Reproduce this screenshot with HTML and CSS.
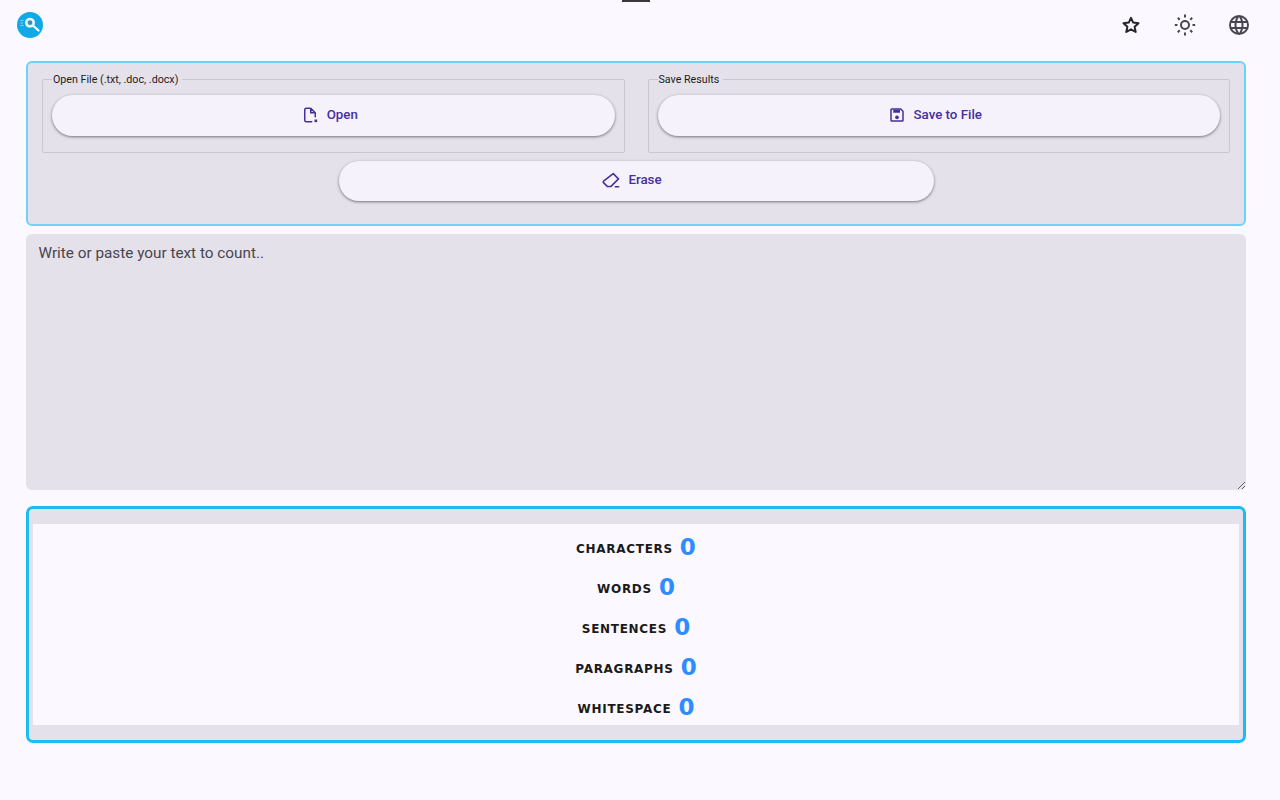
FILE: index.html
```html
<!DOCTYPE html>
<html lang="en">
<head>
<meta charset="utf-8">
<title>Word Counter</title>
<link rel="stylesheet" href="styles.css">
</head>
<body>
<div class="notch"></div>
<header class="topbar">
  <svg class="logo" viewBox="0 0 26 26" aria-label="logo">
    <circle cx="13" cy="13" r="13" fill="#0fa9e6"/>
    <path d="M3.500 8.500h3M3.500 11h2.500M3.500 13.500h3" stroke="#a8def5" stroke-width=".8"/>
    <circle cx="13" cy="10.700" r="5" fill="#eaf8fe"/>
    <circle cx="13" cy="10.700" r="2.400" fill="#3d8fb3"/>
    <path d="M17 14.500l4.500 4" stroke="#fff" stroke-width="2.200" stroke-linecap="round"/>
  </svg>
  <div class="actions">
    <span class="action"><svg viewBox="0 0 24 24"><path fill="none" stroke="#26232c" stroke-width="2" stroke-linejoin="round" d="M12 4.800l2.200 4.800 5.300.6-3.900 3.600 1.100 5.200-4.700-2.700-4.700 2.700 1.100-5.200-3.900-3.600 5.300-.6z"/></svg></span>
    <span class="action"><svg viewBox="0 0 24 24"><circle cx="12" cy="12" r="4" fill="none" stroke="#49454f" stroke-width="2"/><path fill="none" stroke="#49454f" stroke-width="2" d="M12 1.500v3M12 19.500v3M1.800 12h2.700M19.500 12h2.700M4.800 4.800l1.900 1.900M17.300 17.300l1.900 1.900M4.800 19.200l1.900-1.900M17.300 6.700l1.900-1.900"/></svg></span>
    <span class="action"><svg viewBox="0 0 24 24"><path fill="#49454f" d="M12 2a10 10 0 1 0 0 20 10 10 0 0 0 0-20zm6.930 6h-2.950a15.650 15.650 0 0 0-1.380-3.560A8.030 8.030 0 0 1 18.930 8zM12 4.040c.83 1.200 1.480 2.530 1.910 3.960h-3.820c.43-1.430 1.080-2.760 1.910-3.960zM4.260 14C4.100 13.360 4 12.690 4 12s.1-1.360.26-2h3.380c-.08.660-.14 1.320-.14 2s.06 1.340.14 2H4.260zm.82 2h2.950c.32 1.250.78 2.450 1.380 3.560A7.990 7.990 0 0 1 5.080 16zm2.950-8H5.080a7.990 7.990 0 0 1 4.330-3.560A15.650 15.650 0 0 0 8.030 8zM12 19.960c-.83-1.200-1.480-2.530-1.910-3.960h3.820c-.43 1.430-1.080 2.760-1.910 3.960zM14.340 14H9.660c-.09-.66-.16-1.320-.16-2s.07-1.350.16-2h4.680c.09.650.16 1.320.16 2s-.07 1.340-.16 2zm.25 5.560c.6-1.110 1.060-2.310 1.380-3.560h2.950a8.030 8.030 0 0 1-4.330 3.560zM16.360 14c.08-.66.140-1.320.14-2s-.06-1.340-.14-2h3.380c.16.640.26 1.310.26 2s-.1 1.360-.26 2h-3.380z"/></svg></span>
  </div>
</header>
<main class="content">
  <section class="tools">
    <div class="tool-row">
      <fieldset class="group">
        <legend>Open File (.txt, .doc, .docx)</legend>
        <button class="pill" type="button"><svg viewBox="0 0 24 24"><path d="M13 3H7a2 2 0 0 0-2 2v14a2 2 0 0 0 2 2h8M13 3l6 6v6M13 3v6h6" fill="none" stroke="currentColor" stroke-width="2"/><rect x="18" y="18" width="3.500" height="3.500" fill="currentColor"/></svg>Open</button>
      </fieldset>
      <fieldset class="group">
        <legend>Save Results</legend>
        <button class="pill" type="button"><svg viewBox="0 0 24 24"><path d="M5 4h12l3 3v12a1 1 0 0 1-1 1H5a1 1 0 0 1-1-1V5a1 1 0 0 1 1-1z" fill="none" stroke="currentColor" stroke-width="2"/><path d="M7 5h9v4H7z" fill="currentColor"/><circle cx="12" cy="15" r="2.500" fill="currentColor"/></svg>Save to File</button>
      </fieldset>
    </div>
    <button class="pill erase" type="button"><svg viewBox="0 0 24 24"><path d="M15 3.500l7 7-10 10H7l-5-5a1.500 1.500 0 0 1 0-2z" fill="none" stroke="currentColor" stroke-width="2" stroke-linejoin="round"/><path d="M17 21h6" stroke="currentColor" stroke-width="2"/></svg>Erase</button>
  </section>
  <textarea class="input" placeholder="Write or paste your text to count.."></textarea>
  <section class="stats">
    <div class="stats-inner">
      <div class="stat"><span class="label">CHARACTERS</span><span class="value">0</span></div>
      <div class="stat"><span class="label">WORDS</span><span class="value">0</span></div>
      <div class="stat"><span class="label">SENTENCES</span><span class="value">0</span></div>
      <div class="stat"><span class="label">PARAGRAPHS</span><span class="value">0</span></div>
      <div class="stat"><span class="label">WHITESPACE</span><span class="value">0</span></div>
    </div>
  </section>
</main>
</body>
</html>
```
FILE: styles.css
```css
* { box-sizing: border-box; }
html, body { height: 100%; }
body {
  margin: 0;
  background: #fbf8ff;
  font-family: Roboto, "Liberation Sans", sans-serif;
  color: #1d1b20;
  overflow: hidden;
}
.notch {
  position: absolute;
  top: 0;
  left: 622px;
  width: 28px;
  height: 2px;
  background: #3a3a3a;
}
.topbar {
  height: 61px;
  display: flex;
  justify-content: space-between;
  align-items: flex-start;
  padding: 12px 29px 0 17px;
}
.logo { width: 26px; height: 26px; display: block; }
.actions { display: flex; gap: 30px; }
.action { width: 24px; height: 24px; display: block; margin-top: 1px; }
.action svg { width: 24px; height: 24px; display: block; }
.content {
  margin: 0 34px 0 26px;
  display: flex;
  flex-direction: column;
}
.tools {
  height: 165px;
  background: #e4e1ea;
  border: 2px solid #6dd2f7;
  border-radius: 6px;
  padding: 9px 14px 0;
  display: flex;
  flex-direction: column;
  align-items: center;
}
.tool-row {
  width: 100%;
  display: flex;
  gap: 23px;
}
.group {
  flex: 1;
  margin: 0;
  min-width: 0;
  height: 81px;
  border: 1px solid #cac6d0;
  border-radius: 2px;
  padding: 0 9px;
}
.group legend {
  font-size: 10.700px;
  line-height: 12px;
  padding: 2px 4px 0 1px;
  color: #1d1b20;
}
.pill {
  width: 100%;
  height: 41px;
  margin-top: 9px;
  border: 0;
  border-radius: 21px;
  background: #f6f2fc;
  color: #452f9c;
  font: 500 13.300px/20px Roboto, sans-serif;
  display: flex;
  align-items: center;
  justify-content: center;
  gap: 8px;
  padding: 0 8px 2px 0;
  box-shadow: 0 1px 3px 1px rgba(0,0,0,.15), 0 1px 2px rgba(0,0,0,.3);
}
.pill svg { width: 18px; height: 18px; display: block; }
.erase {
  width: 595px;
  height: 40px;
  margin-top: 8px;
}
.input {
  display: block;
  width: 100%;
  height: 256px;
  margin-top: 8px;
  border: 0;
  outline: 0;
  border-radius: 6px;
  background: #e4e1ea;
  padding: 9px 12.500px;
  font: 15.300px/20px Roboto, sans-serif;
  color: #49454f;
  resize: vertical;
}
.input::placeholder { color: #49454f; opacity: 1; }
.stats {
  margin-top: 16px;
  height: 237px;
  background: #e4e1ea;
  border: 3px solid #1cbcf2;
  border-radius: 7px;
  padding: 15px 4px 0;
}
.stats-inner {
  height: 201px;
  background: #fbf8ff;
  display: flex;
  flex-direction: column;
  gap: 8px;
  padding-top: 8px;
}
.stat {
  height: 32px;
  display: flex;
  justify-content: center;
  align-items: center;
  gap: 7px;
}
.label {
  font: 700 12px/16px "DejaVu Sans", sans-serif;
  letter-spacing: .7px;
  color: #1a1a1a;
  padding-top: 2px;
}
.value {
  font: 700 23px/26px "DejaVu Sans", sans-serif;
  color: #2f8cff;
  padding-bottom: 2px;
}
```
